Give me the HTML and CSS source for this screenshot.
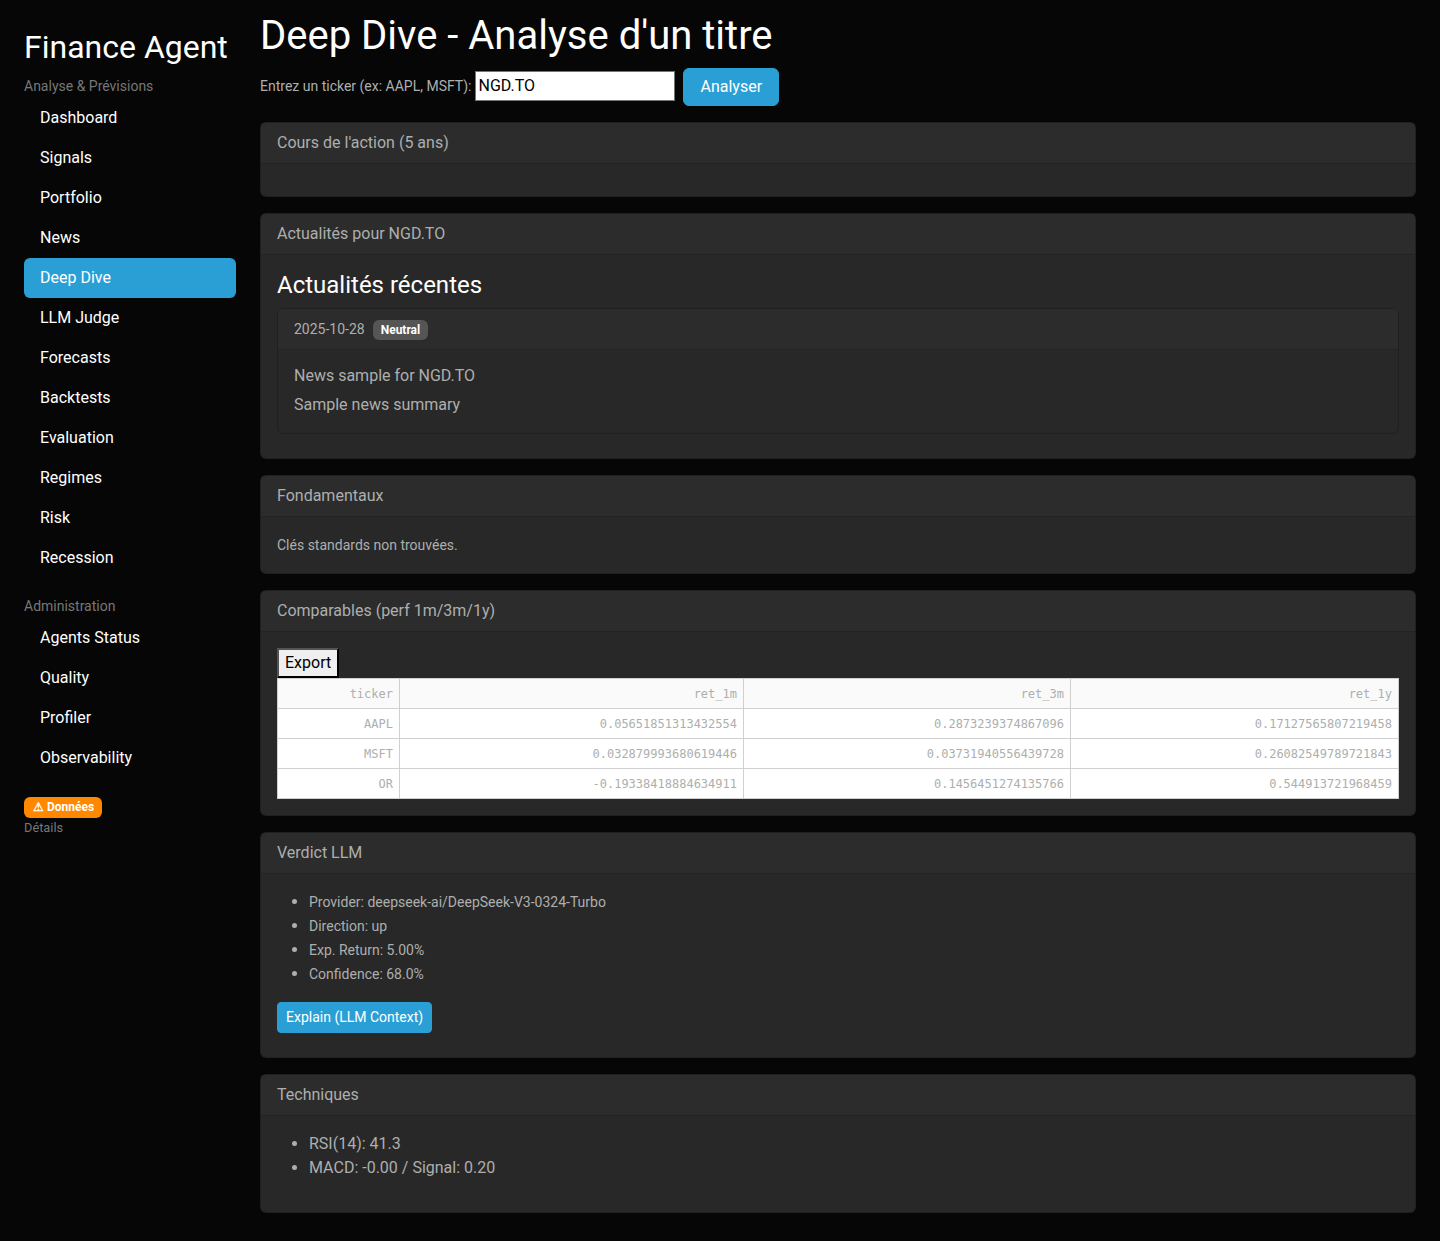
FILE: index.html
```html
<!DOCTYPE html>
<html lang="en">
<head>
    <meta charset="UTF-8">
    <title>Finance Agent</title>
    <link rel="stylesheet" href="styles.css">
</head>
<body>
    <div class="layout">
        <aside class="sidebar">
            <h2 class="brand">Finance Agent</h2>
            <div class="nav-title">Analyse &amp; Prévisions</div>
            <nav class="nav">
                <a class="nav-link" href="#">Dashboard</a>
                <a class="nav-link" href="#">Signals</a>
                <a class="nav-link" href="#">Portfolio</a>
                <a class="nav-link" href="#">News</a>
                <a class="nav-link active" href="#">Deep Dive</a>
                <a class="nav-link" href="#">LLM Judge</a>
                <a class="nav-link" href="#">Forecasts</a>
                <a class="nav-link" href="#">Backtests</a>
                <a class="nav-link" href="#">Evaluation</a>
                <a class="nav-link" href="#">Regimes</a>
                <a class="nav-link" href="#">Risk</a>
                <a class="nav-link" href="#">Recession</a>
            </nav>
            <div class="nav-title nav-title-admin">Administration</div>
            <nav class="nav">
                <a class="nav-link" href="#">Agents Status</a>
                <a class="nav-link" href="#">Quality</a>
                <a class="nav-link" href="#">Profiler</a>
                <a class="nav-link" href="#">Observability</a>
            </nav>
            <div class="status">
                <span class="badge badge-warning">⚠ Données</span>
                <div class="status-detail">Détails</div>
            </div>
        </aside>

        <main class="main">
            <h1 class="page-title">Deep Dive - Analyse d'un titre</h1>
            <div class="ticker-form">
                <label class="ticker-label" for="ticker">Entrez un ticker (ex: AAPL, MSFT):</label>
                <input class="ticker-input" type="text" id="ticker" value="NGD.TO">
                <button class="btn btn-primary">Analyser</button>
            </div>

            <section class="card">
                <div class="card-header">Cours de l'action (5 ans)</div>
                <div class="card-body"></div>
            </section>

            <section class="card">
                <div class="card-header">Actualités pour NGD.TO</div>
                <div class="card-body">
                    <h4 class="news-heading">Actualités récentes</h4>
                    <div class="card card-inner">
                        <div class="card-header news-meta">
                            <span>2025-10-28</span>
                            <span class="badge badge-neutral">Neutral</span>
                        </div>
                        <div class="card-body">
                            <h6 class="news-title">News sample for NGD.TO</h6>
                            <p class="news-summary">Sample news summary</p>
                        </div>
                    </div>
                </div>
            </section>

            <section class="card">
                <div class="card-header">Fondamentaux</div>
                <div class="card-body">
                    <small class="note">Clés standards non trouvées.</small>
                </div>
            </section>

            <section class="card">
                <div class="card-header">Comparables (perf 1m/3m/1y)</div>
                <div class="card-body">
                    <button class="export-btn">Export</button>
                    <table class="grid">
                        <colgroup>
                            <col class="col-ticker">
                            <col class="col-1m">
                            <col class="col-3m">
                            <col class="col-1y">
                        </colgroup>
                        <thead>
                            <tr><th>ticker</th><th>ret_1m</th><th>ret_3m</th><th>ret_1y</th></tr>
                        </thead>
                        <tbody>
                            <tr><td>AAPL</td><td>0.05651851313432554</td><td>0.2873239374867096</td><td>0.17127565807219458</td></tr>
                            <tr><td>MSFT</td><td>0.032879993680619446</td><td>0.03731940556439728</td><td>0.26082549789721843</td></tr>
                            <tr><td>OR</td><td>-0.19338418884634911</td><td>0.1456451274135766</td><td>0.544913721968459</td></tr>
                        </tbody>
                    </table>
                </div>
            </section>

            <section class="card">
                <div class="card-header">Verdict LLM</div>
                <div class="card-body">
                    <ul class="list list-small">
                        <li>Provider: deepseek-ai/DeepSeek-V3-0324-Turbo</li>
                        <li>Direction: up</li>
                        <li>Exp. Return: 5.00%</li>
                        <li>Confidence: 68.0%</li>
                    </ul>
                    <button class="btn btn-primary btn-sm">Explain (LLM Context)</button>
                </div>
            </section>

            <section class="card">
                <div class="card-header">Techniques</div>
                <div class="card-body">
                    <ul class="list">
                        <li>RSI(14): 41.3</li>
                        <li>MACD: -0.00 / Signal: 0.20</li>
                    </ul>
                </div>
            </section>
        </main>
    </div>
</body>
</html>
```

FILE: styles.css
```css
* { box-sizing: border-box; }
body { margin: 0; background: #060606; color: #adafae; font-family: Roboto, "Liberation Sans", sans-serif; font-size: 16px; line-height: 24px; }

.layout { display: flex; align-items: flex-start; }

/* sidebar */
.sidebar { width: 260px; flex-shrink: 0; padding: 28px 24px 0; }
.brand { margin: 0 0 10px; color: #fff; font-size: 32px; font-weight: 400; line-height: 38px; }
.nav-title { margin-bottom: 2px; color: #777; font-size: 14px; line-height: 20px; }
.nav-title-admin { margin-top: 18px; }
.nav { display: flex; flex-direction: column; }
.nav-link { display: block; padding: 8px 16px; border-radius: 6px; color: #fff; text-decoration: none; }
.nav-link.active { background: #2a9fd6; }
.status { margin-top: 19px; }
.status-detail { color: #777; font-size: 12.8px; line-height: 19px; }

.badge { display: inline-block; color: #fff; font-size: 12px; font-weight: 700; line-height: 12px; white-space: nowrap; }
.badge-warning { display: block; width: 78px; padding: 4px 0 5px 9px; border-radius: 6px; background: #f80; }
.badge-neutral { margin-top: 2px; padding: 4px 8px; border-radius: 6px; background: #555; }

/* main column */
.main { flex: 1; min-width: 0; padding: 12px 24px 28px 0; }
.page-title { margin: 0 0 8px; color: #fff; font-size: 40px; font-weight: 400; line-height: 48px; }
.ticker-form { display: flex; align-items: center; margin-bottom: 16px; }
.ticker-label { margin-bottom: 2px; color: #adafae; font-size: 14px; }
.ticker-input { width: 200px; height: 30px; margin: 0 8px 2px 4px; padding: 0 2px 2px; border: 1px solid #767676; background: #fff; color: #000; font-family: inherit; font-size: 16px; }

.btn { padding: 6px 16px; border: 1px solid #2a9fd6; border-radius: 6px; color: #fff; font-family: inherit; font-size: 16px; line-height: 24px; cursor: pointer; }
.btn-primary { background: #2a9fd6; }
.btn-sm { display: block; margin-bottom: 8px; padding: 4px 8px; border-radius: 4px; font-size: 14px; line-height: 21px; }

.card { margin-bottom: 16px; border: 1px solid rgba(0,0,0,0.2); border-radius: 6px; background: #282828; }
.card-header { padding: 8px 16px; border-bottom: 1px solid rgba(0,0,0,0.125); background: rgba(255,255,255,0.02); background-clip: padding-box; color: #adafae; }
.card-body { padding: 16px; }

.news-heading { margin: 0 0 8px; color: #fff; font-size: 24px; font-weight: 400; line-height: 29px; }
.card-inner { margin-bottom: 8px; }
.news-meta { display: flex; align-items: center; gap: 8px; font-size: 14px; }
.news-title { margin: 0 0 8px; color: #adafae; font-size: 16px; font-weight: 400; line-height: 19px; }
.news-summary { margin: 0; }
.note { font-size: 14px; }

.export-btn { display: block; padding: 1px 6px; border: 2px outset #000; background: #efefef; color: #000; font-family: inherit; font-size: 16px; line-height: 24px; }
.grid { width: 1121px; table-layout: fixed; border-collapse: collapse; background: #fff; color: #adafae; font-family: "DejaVu Sans Mono", monospace; font-size: 12px; line-height: 18px; }
.grid th, .grid td { height: 30px; padding: 0 6px; border: 1px solid #d0d0d0; font-weight: 400; text-align: right; }
.grid th { background: #fafafa; }
.col-ticker { width: 122px; }
.col-1m { width: 344px; }
.col-3m { width: 327px; }
.col-1y { width: 328px; }

.list { margin: 0 0 16px; padding-left: 32px; }
.list-small { font-size: 14px; }
.list-small li::marker { font-size: 16px; }
```
